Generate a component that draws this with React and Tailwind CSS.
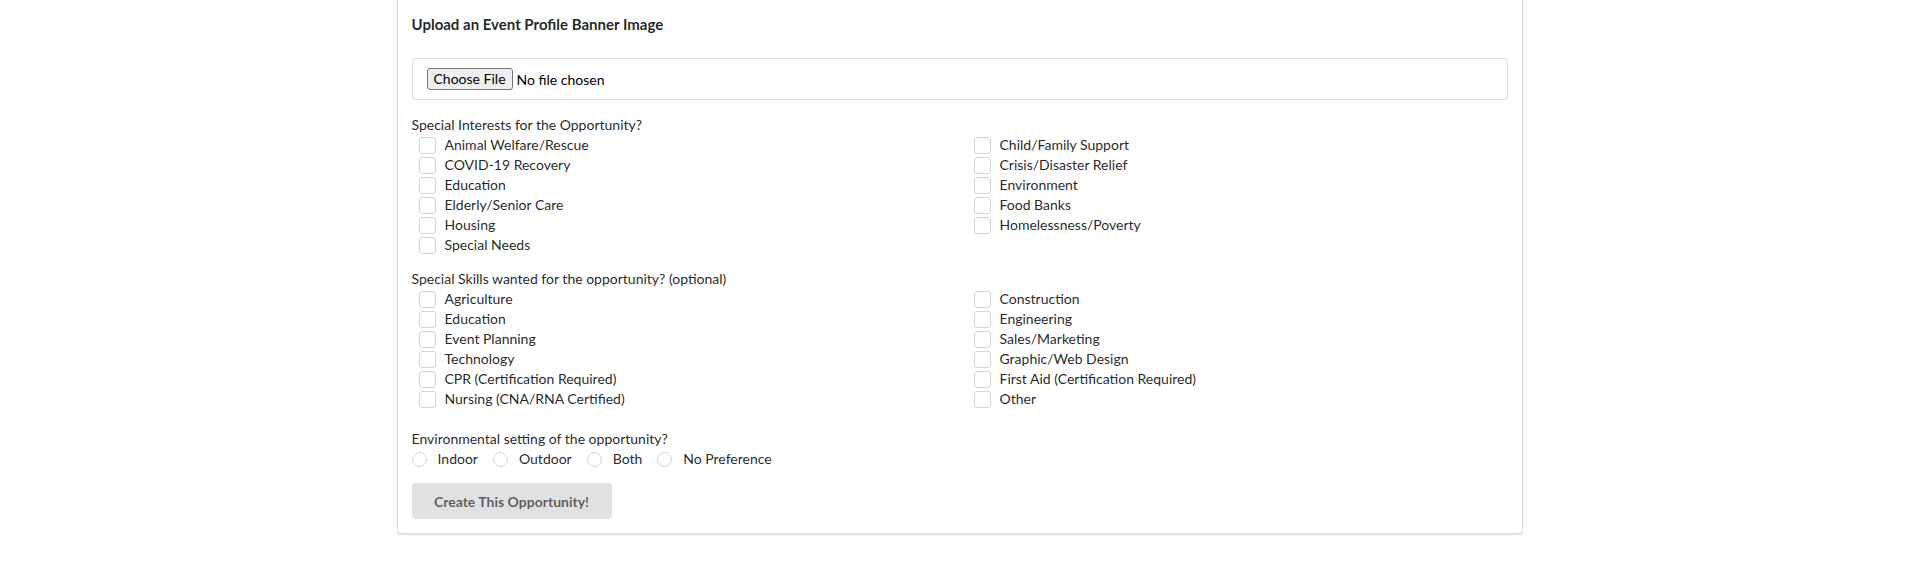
import React from "react";

const interestsLeft = ["Animal Welfare/Rescue", "COVID-19 Recovery", "Education", "Elderly/Senior Care", "Housing", "Special Needs"];
const interestsRight = ["Child/Family Support", "Crisis/Disaster Relief", "Environment", "Food Banks", "Homelessness/Poverty"];
const skillsLeft = ["Agriculture", "Education", "Event Planning", "Technology", "CPR (Certification Required)", "Nursing (CNA/RNA Certified)"];
const skillsRight = ["Construction", "Engineering", "Sales/Marketing", "Graphic/Web Design", "First Aid (Certification Required)", "Other"];

function Check({ label }) {
  return (
    <label className="flex h-[20px] items-center">
      <span className="box-border h-[17px] w-[17px] shrink-0 rounded-[3px] border border-[#d4d4d5] bg-white" />
      <span className="ml-[9px] leading-[20px] text-[rgba(0,0,0,0.87)]">{label}</span>
    </label>
  );
}

function Radio({ label }) {
  return (
    <label className="mr-[15px] flex h-[20px] items-center">
      <span className="box-border h-[15px] w-[15px] shrink-0 rounded-full border border-[#d4d4d5] bg-white" />
      <span className="ml-[11px] leading-[20px] text-[rgba(0,0,0,0.87)]">{label}</span>
    </label>
  );
}

function Group({ title, left, right }) {
  return (
    <div>
      <div className="h-[20px] leading-[20px] text-[rgba(0,0,0,0.87)]">{title}</div>
      <div className="grid grid-cols-[555px_1fr] pl-[7px]">
        <div className="flex flex-col">
          {left.map((l) => (
            <Check key={l} label={l} />
          ))}
        </div>
        <div className="flex flex-col">
          {right.map((l) => (
            <Check key={l} label={l} />
          ))}
        </div>
      </div>
    </div>
  );
}

export default function App() {
  return (
    <div className="min-h-[588px] w-full bg-white font-['Lato','Liberation_Sans',sans-serif] text-[14px]">
      <div className="mx-auto -mt-[20px] box-border w-[1126px] rounded-[4px] border border-[rgba(34,36,38,0.15)] bg-white px-[14px] pb-[14px] pt-[33px] shadow-[0_1px_2px_0_rgba(34,36,38,0.15)]">
        <div className="h-[20px] text-[15px] font-bold leading-[20px] text-[rgba(0,0,0,0.87)]">Upload an Event Profile Banner Image</div>
        <div className="mt-[24px] box-border flex h-[42px] items-center rounded-[4px] border border-[rgba(34,36,38,0.15)] px-[14px]">
          <button className="box-border h-[22px] rounded-[3px] border border-[#767676] bg-[#efefef] px-[6px] text-[14px] leading-[20px] text-black">
            Choose File
          </button>
          <span className="ml-[4px] text-black">No file chosen</span>
        </div>
        <div className="mt-[15px]">
          <Group title="Special Interests for the Opportunity?" left={interestsLeft} right={interestsRight} />
        </div>
        <div className="mt-[14px]">
          <Group title="Special Skills wanted for the opportunity? (optional)" left={skillsLeft} right={skillsRight} />
        </div>
        <div className="mt-[20px]">
          <div className="h-[20px] leading-[20px] text-[rgba(0,0,0,0.87)]">Environmental setting of the opportunity?</div>
          <div className="flex">
            <Radio label="Indoor" />
            <Radio label="Outdoor" />
            <Radio label="Both" />
            <Radio label="No Preference" />
          </div>
        </div>
        <button className="mt-[14px] h-[36px] w-[200px] rounded-[4px] bg-[#e0e1e2] text-[14px] font-bold text-[rgba(0,0,0,0.6)]">
          Create This Opportunity!
        </button>
      </div>
    </div>
  );
}
